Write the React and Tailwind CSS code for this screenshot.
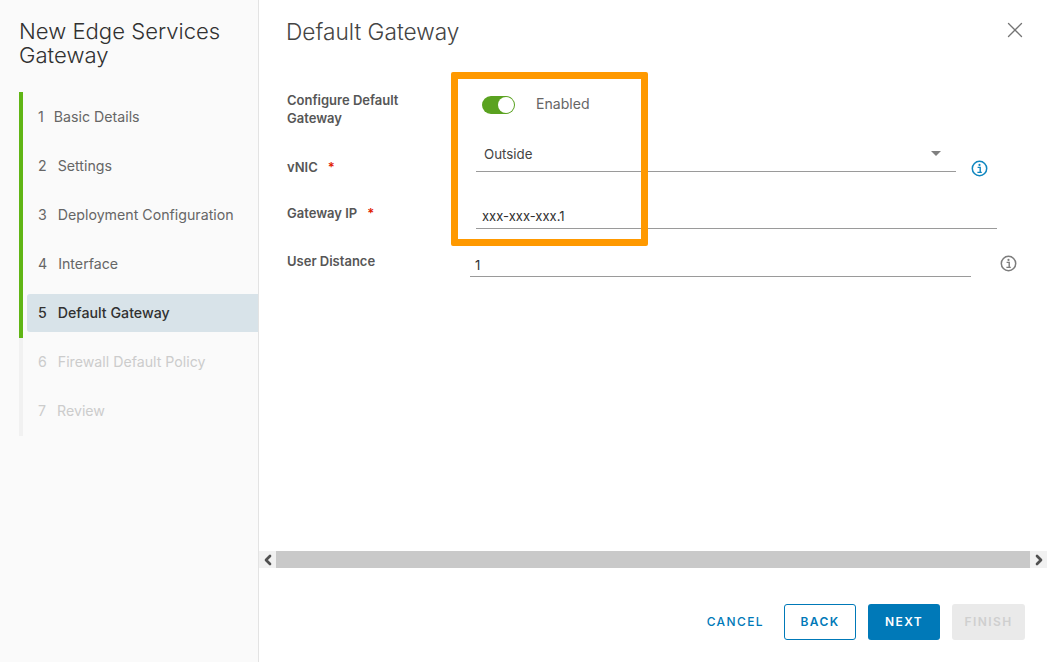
import { X, ChevronLeft, ChevronRight } from "lucide-react";

const steps = [
  { n: 1, label: "Basic Details", gap: "gap-[10px]", state: "done" },
  { n: 2, label: "Settings", gap: "gap-[11px]", state: "done" },
  { n: 3, label: "Deployment Configuration", gap: "gap-[11px]", state: "done" },
  { n: 4, label: "Interface", gap: "gap-[11px]", state: "done" },
  { n: 5, label: "Default Gateway", gap: "gap-[11px]", state: "active" },
  { n: 6, label: "Firewall Default Policy", gap: "gap-[11px]", state: "todo" },
  { n: 7, label: "Review", gap: "gap-[11px]", state: "todo" },
];

function InfoIcon({ color, className }) {
  return (
    <svg width="17" height="17" viewBox="0 0 17 17" fill="none" className={className}>
      <circle cx="8.5" cy="8.5" r="7.2" stroke={color} strokeWidth="1.5" />
      <circle cx="8.5" cy="4.9" r="1.1" fill={color} />
      <path d="M6.6 7.4h2.6v4.6M6.4 12.4h4.4" stroke={color} strokeWidth="1.4" />
    </svg>
  );
}

function Step({ step }) {
  const text =
    step.state === "active"
      ? "bg-[#d8e3e9] text-[#313131] font-medium rounded-l-[3px]"
      : step.state === "done"
        ? "text-[#666666]"
        : "text-[#cccccc]";
  return (
    <div className="flex h-[49px] items-center">
      <div
        className={`flex h-[38px] flex-1 items-center pl-[11px] text-[14.2px] ${step.gap} ${text}`}
      >
        <span>{step.n}</span>
        <span>{step.label}</span>
      </div>
    </div>
  );
}

function Sidebar() {
  return (
    <aside className="flex h-full w-[259px] shrink-0 flex-col border-r border-[#e3e3e3] bg-[#fafafa] pl-[19px]">
      <h1 className="mt-[19px] text-[22.1px] font-light leading-[24px] text-[#313131]">
        New Edge Services
        <br />
        Gateway
      </h1>
      <div className="relative mt-[25px] pl-[8px]">
        <div className="absolute left-0 top-0 h-[344px] w-[4px] bg-[#f1f1f1]" />
        <div className="absolute left-0 top-0 h-[246px] w-[4px] bg-[#60b515]" />
        {steps.map((s) => (
          <Step key={s.n} step={s} />
        ))}
      </div>
    </aside>
  );
}

function Label({ children, required, className = "" }) {
  return (
    <div className={`w-[183px] shrink-0 text-[13px] font-semibold leading-[18px] text-[#565656] ${className}`}>
      {children}
      {required && <span className="ml-[10px] text-[#e12200]">*</span>}
    </div>
  );
}

function Form() {
  return (
    <div className="mt-[47px] flex flex-col pl-[28px]">
      <div className="flex h-[46px]">
        <Label className="mt-[-1px]">
          Configure Default
          <br />
          Gateway
        </Label>
        <div className="mt-[4px] flex h-[18px] items-center pl-[12px]">
          <div className="flex h-[18px] w-[33px] items-center justify-end rounded-full bg-[#5aa220] pr-[1px]">
            <div className="h-[16px] w-[16px] rounded-full bg-white" />
          </div>
          <span className="mb-[2px] ml-[21px] text-[14.1px] text-[#666666]">Enabled</span>
        </div>
      </div>
      <div className="flex h-[55px]">
        <Label className="mt-[20px] text-[#313131]" required>
          vNIC
        </Label>
        <div className="ml-[6px] flex h-[34px] w-[480px] items-center justify-between border-b border-[#9a9a9a] pl-[8px] pr-[15px] text-[13.3px] text-[#444444]">
          <span>Outside</span>
          <span className="mb-[2px] h-0 w-0 border-x-[5px] border-t-[5px] border-x-transparent border-t-[#808080]" />
        </div>
        <InfoIcon color="#0f86bf" className="ml-[15px] mt-[22px]" />
      </div>
      <div className="flex h-[62px]">
        <Label className="mt-[11px]" required>
          Gateway IP
        </Label>
        <div className="ml-[6px] flex h-[36px] w-[521px] items-end border-b border-[#9a9a9a] pb-[2px] pl-[6px] text-[13px] text-[#313131]">
          xxx-xxx-xxx.1
        </div>
      </div>
      <div className="flex">
        <Label className="mt-[-3px]">User Distance</Label>
        <div className="mt-[-14px] flex h-[36px] w-[501px] items-end border-b border-[#9a9a9a] pb-[1px] pl-[5px] text-[13px] text-[#313131]">
          1
        </div>
        <InfoIcon color="#7c7c7c" className="ml-[29px]" />
      </div>
    </div>
  );
}

function Scrollbar() {
  return (
    <div className="flex h-[17px] w-full bg-[#f1f1f1] text-[#505050]">
      <div className="flex w-[17px] items-center justify-center">
        <ChevronLeft size={16} strokeWidth={4} />
      </div>
      <div className="flex-1 bg-[#c9c9c9]" />
      <div className="flex w-[17px] items-center justify-center">
        <ChevronRight size={16} strokeWidth={4} />
      </div>
    </div>
  );
}

function Footer() {
  const base =
    "flex h-[36px] w-[72px] items-center justify-center rounded-[3px] text-[12px] font-semibold tracking-[1.4px]";
  return (
    <div className="mt-[36px] flex items-center justify-end pr-[22px]">
      <button className="mr-[20px] text-[12px] font-medium tracking-[1.4px] text-[#0079b8]">CANCEL</button>
      <button className={`${base} mr-[12px] border border-[#0079b8] font-medium text-[#0079b8]`}>BACK</button>
      <button className={`${base} mr-[12px] bg-[#0079b8] text-white`}>NEXT</button>
      <button className={`${base} w-[73px] bg-[#eaeaea] text-[#cfcfcf]`}>FINISH</button>
    </div>
  );
}

export default function App() {
  return (
    <div className="relative flex h-[662px] w-[1047px] overflow-hidden bg-white font-['Inter','Liberation_Sans',sans-serif]">
      <Sidebar />
      <main className="flex min-w-0 flex-1 flex-col">
        <div className="flex items-start justify-between pl-[27px] pr-[19px] pt-[19px]">
          <h2 className="text-[22.7px] font-light leading-[26px] text-[#444444]">Default Gateway</h2>
          <X size={26} strokeWidth={1.2} color="#747474" className="mt-[-2px]" />
        </div>
        <Form />
        <div className="mt-auto">
          <Scrollbar />
          <Footer />
          <div className="h-[22px]" />
        </div>
      </main>
      {/* orange callout drawn over the form */}
      <div className="pointer-events-none absolute left-[451px] top-[72px] h-[174px] w-[197px] rounded-[2px] border-[7px] border-[#ff9900]" />
    </div>
  );
}
